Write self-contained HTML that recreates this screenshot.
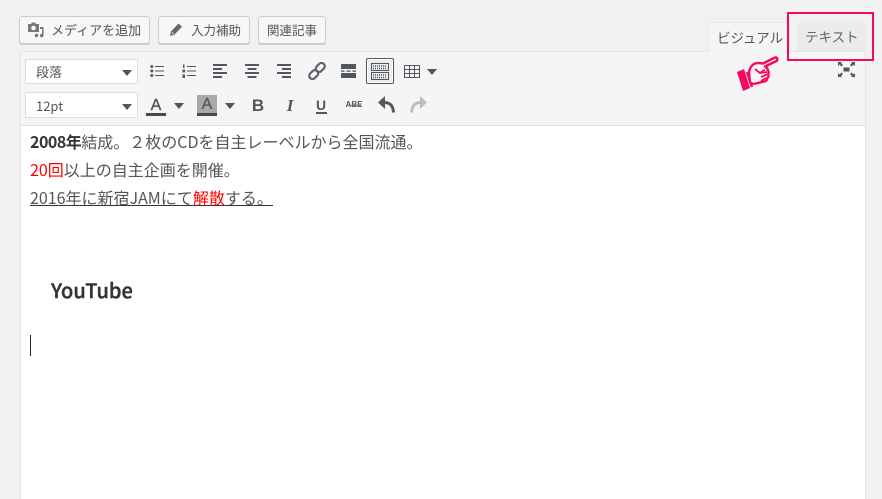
<!DOCTYPE html>
<html lang="ja">
<head>
<meta charset="utf-8">
<style>
html,body{margin:0;padding:0}
body{width:882px;height:499px;overflow:hidden;background:#f1f1f1;position:relative;font-family:"Noto Sans CJK JP","Liberation Sans",sans-serif;color:#555}
.a{position:absolute;box-sizing:border-box}
.btn{background:#f7f7f7;border:1px solid #cccccc;border-radius:3px;box-shadow:0 1px 0 #ccc;height:28px;top:16px;font-size:13px;line-height:26px;color:#555;white-space:nowrap;text-align:left}
.sel{left:25px;width:113px;background:#fff;border:1px solid #ddd;font-size:13px;color:#555;padding-left:10px;line-height:24px}
.sel i{position:absolute;right:5px;top:10px;width:0;height:0;border-left:5px solid transparent;border-right:5px solid transparent;border-top:6px solid #555}
.tri{width:0;height:0;border-left:5px solid transparent;border-right:5px solid transparent;border-top:6px solid #555}
.txt{left:30px;font-size:16px;color:#555;white-space:nowrap;line-height:24px;font-family:"Noto Sans CJK JP","Liberation Sans",sans-serif}
.r{color:#f00}
svg{position:absolute;overflow:visible}
</style>
</head>
<body>
<!-- buttons -->
<div class="a btn" style="left:19px;width:131px;padding-left:31px">メディアを追加</div>
<svg style="left:27px;top:22px" width="18" height="16" viewBox="0 0 18 16"><path d="M1 2h3l1-1.500h3l1 1.500h3v8H1z" fill="#777"/><circle cx="6.500" cy="6" r="2.300" fill="#f7f7f7"/><path d="M13 5h3.500v8.500a1.800 1.800 0 1 1-1.500-1.700V7h-2z" fill="#777"/><circle cx="9.500" cy="13.500" r="1.700" fill="#777"/></svg>
<div class="a btn" style="left:158px;width:92px;padding-left:32px;font-size:12.500px">入力補助</div>
<svg style="left:169px;top:22px" width="14" height="15" viewBox="0 0 14 15"><path d="M1 14l1-4.500L9.500 1.500l3.500 3.300-7.700 8z" fill="#666"/><path d="M3 10.500l1.500 1.500" stroke="#f7f7f7" stroke-width="1"/></svg>
<div class="a btn" style="left:258px;width:68px;padding-left:8px;font-size:12.500px">関連記事</div>

<!-- editor frame -->
<div class="a" style="left:20px;top:51px;width:846px;height:448px;background:#fff;border:1px solid #e5e5e5;border-bottom:0"></div>
<div class="a" style="left:21px;top:52px;width:844px;height:73px;background:#f5f5f5"></div>
<div class="a" style="left:21px;top:125px;width:844px;height:1px;background:#dedede"></div>

<!-- tabs -->
<div class="a" style="left:708px;top:22px;width:82px;height:30px;background:#f5f5f5;border:1px solid #e8e8e8;border-bottom:0;font-size:13.500px;line-height:28px;padding-left:8px;color:#555;white-space:nowrap">ビジュアル</div>
<div class="a" style="left:797px;top:23px;width:69px;height:28px;background:#ebebeb;font-size:13.500px;line-height:27px;padding-left:8px;color:#666;white-space:nowrap">テキスト</div>
<div class="a" style="left:787px;top:12px;width:87px;height:49px;border:2px solid #f5085f"></div>

<!-- hand -->
<svg style="left:736px;top:55px" width="42" height="39" viewBox="0 0 42 39">
<path d="M1 17l7-3 6 19-7 3z" fill="#f5085f"/>
<path d="M11 17l5 15" stroke="#f5085f" stroke-width="2.500"/>
<path d="M13 17c1-5 4-9 9-9 2 0 4 .5 5 .5L39 2.500c2.500-.5 3 2.500 1.500 3.500L29 11.500c2 1 3 2 2.500 3.500 1.500 1 1.500 3 .5 4 1 1.500.5 3.500-1 4.500 0 2-1.500 3-3 3l-6 1.500c-4 1-6.500 1.500-8-1z" fill="#fdf4f7" stroke="#f5085f" stroke-width="2.400" stroke-linejoin="round"/>
<path d="M19 14l5 4c2-1 3-3 5-3M25 18l6-1M25 22l6-2.500M25 26l5-3" stroke="#f5085f" stroke-width="1.800" fill="none"/>
</svg>

<!-- fullscreen -->
<svg style="left:838px;top:62px" width="17" height="15" viewBox="0 0 17 15"><g fill="#555"><rect x="5.500" y="5.500" width="6" height="4"/><path d="M0 0h4L3 1l2 2-1.500 1.500-2-2-1.500 1.500zM17 0h-4l1 1-2 2 1.500 1.500 2-2 1.500 1.500zM0 15h4l-1-1 2-2-1.500-1.500-2 2L0 11zM17 15h-4l1-1-2-2 1.500-1.500 2 2 1.500-1.500z"/></g></svg>

<!-- selects -->
<div class="a sel" style="top:59px;height:25px">段落<i></i></div>
<div class="a sel" style="top:92px;height:26px;line-height:26px">12pt<i style="top:11px"></i></div>

<!-- toolbar row 1 -->
<svg style="left:150px;top:64px" width="14" height="14" viewBox="0 0 14 14"><g fill="#50575e"><circle cx="1.800" cy="2.500" r="1.500"/><circle cx="1.800" cy="7" r="1.500"/><circle cx="1.800" cy="11.500" r="1.500"/><rect x="5" y="2" width="9" height="1"/><rect x="5" y="6.500" width="9" height="1"/><rect x="5" y="11" width="9" height="1"/></g></svg>
<svg style="left:182px;top:64px" width="14" height="14" viewBox="0 0 14 14"><g fill="#50575e"><rect x="1" y="0.500" width="1.500" height="3.500"/><rect x="0.500" y="5.500" width="2.500" height="3"/><rect x="0.500" y="10.500" width="2.500" height="3.500"/><rect x="5" y="2" width="9" height="1"/><rect x="5" y="6.500" width="9" height="1"/><rect x="5" y="11" width="9" height="1"/></g></svg>
<svg style="left:213px;top:64px" width="14" height="14" viewBox="0 0 14 14"><g fill="#50575e"><rect x="0" y="0" width="14" height="2"/><rect x="0" y="4" width="9" height="2"/><rect x="0" y="8" width="14" height="2"/><rect x="0" y="12" width="9" height="2"/></g></svg>
<svg style="left:245px;top:64px" width="14" height="14" viewBox="0 0 14 14"><g fill="#50575e"><rect x="0" y="0" width="14" height="2"/><rect x="2.500" y="4" width="9" height="2"/><rect x="0" y="8" width="14" height="2"/><rect x="2.500" y="12" width="9" height="2"/></g></svg>
<svg style="left:277px;top:64px" width="14" height="14" viewBox="0 0 14 14"><g fill="#50575e"><rect x="0" y="0" width="14" height="2"/><rect x="5" y="4" width="9" height="2"/><rect x="0" y="8" width="14" height="2"/><rect x="5" y="12" width="9" height="2"/></g></svg>
<svg style="left:308px;top:62px" width="18" height="18" viewBox="0 0 18 18"><g fill="none" stroke="#5c636a" stroke-width="2.200"><rect x="9" y="0.500" width="6.500" height="10" rx="3.200" transform="rotate(45 12.300 5.500)"/><rect x="2.500" y="7.500" width="6.500" height="10" rx="3.200" transform="rotate(45 5.700 12.500)"/></g></svg>
<svg style="left:341px;top:64px" width="15" height="14" viewBox="0 0 15 14"><g fill="#50575e"><rect y="0" width="15" height="5"/><rect y="6.500" width="3.500" height="1.300"/><rect x="5.500" y="6.500" width="4" height="1.300"/><rect x="11.500" y="6.500" width="3.500" height="1.300"/><rect y="9" width="15" height="5"/></g></svg>
<div class="a" style="left:366px;top:58px;width:28px;height:26px;border:1px solid #555;border-radius:2px;background:#ececec;box-shadow:inset 0 0 0 1px #fff"></div>
<svg style="left:371px;top:63px" width="18" height="17" viewBox="0 0 18 17"><g fill="none" stroke="#50575e"><rect x="0.500" y="0.500" width="17" height="7"/><rect x="0.500" y="9.500" width="17" height="7"/></g><g stroke="#50575e" stroke-dasharray="1 1" stroke-width="1.500"><path d="M2 3h14M2 5.500h14M2 12h14M2 14.500h14"/></g></svg>
<svg style="left:404px;top:65px" width="16" height="13" viewBox="0 0 16 13"><g fill="none" stroke="#50575e"><rect x="0.500" y="0.500" width="15" height="12"/><path d="M5.500 0v13M10.500 0v13M0 4.500h16M0 8.500h16"/></g></svg>
<div class="a tri" style="left:427px;top:69px"></div>

<!-- toolbar row 2 -->
<div class="a" style="left:146px;top:96px;width:20px;height:19px;text-align:center;font-size:16px;line-height:19px;color:#50575e;-webkit-text-stroke:.4px #50575e;font-family:'Liberation Sans',sans-serif">A</div>
<div class="a" style="left:146px;top:113px;width:20px;height:3px;background:#444b52"></div>
<div class="a tri" style="left:174px;top:103px"></div>
<div class="a" style="left:197px;top:95px;width:20px;height:18px;background:#a9a9a9;text-align:center;font-size:16px;line-height:19px;color:#50575e;-webkit-text-stroke:.3px #50575e;font-family:'Liberation Sans',sans-serif">A</div>
<div class="a" style="left:197px;top:113px;width:20px;height:3px;background:#444b52"></div>
<div class="a tri" style="left:225px;top:103px"></div>
<div class="a" style="left:250px;top:95px;width:16px;height:20px;text-align:center;font-size:17px;font-weight:700;line-height:21px;color:#50575e;font-family:'Liberation Sans',sans-serif">B</div>
<div class="a" style="left:282px;top:95px;width:16px;height:20px;text-align:center;font-size:17px;font-weight:700;font-style:italic;line-height:21px;color:#50575e;font-family:'Liberation Serif',serif">I</div>
<div class="a" style="left:314px;top:96px;width:14px;height:17px;text-align:center;font-size:14px;font-weight:700;line-height:18px;color:#50575e;font-family:'Liberation Sans',sans-serif">U</div>
<div class="a" style="left:316px;top:112px;width:11px;height:2px;background:#50575e"></div>
<div class="a" style="left:343px;top:99px;width:22px;height:12px;text-align:center;font-size:8px;font-weight:700;line-height:12px;color:#50575e;font-family:'Liberation Sans',sans-serif">ABE</div>
<div class="a" style="left:346px;top:105px;width:15px;height:1px;background:#777"></div>
<svg style="left:378px;top:96px" width="17" height="17" viewBox="0 0 17 17"><path d="M0 6.500L7 0v13z" fill="#50575e"/><path d="M6 6.500c5 0 9 2 9.500 10" fill="none" stroke="#50575e" stroke-width="3"/></svg>
<svg style="left:410px;top:96px" width="17" height="17" viewBox="0 0 17 17"><path d="M17 6.500L10 0v13z" fill="#b9bec3"/><path d="M11 6.500c-5 0-9 2-9.500 10" fill="none" stroke="#b9bec3" stroke-width="3"/></svg>

<!-- content -->
<div class="a txt" style="top:129px"><b style="color:#333;letter-spacing:-.5px">2008年</b>結成。２枚のCDを自主レーベルから全国流通。</div>
<div class="a txt" style="top:157px"><span class="r">20回</span>以上の自主企画を開催。</div>
<div class="a txt" style="top:185px;width:243px;overflow:hidden;height:26px"><span style="text-decoration:underline;text-decoration-color:#333">2016年に新宿JAMにて<span class="r">解散</span>する。&nbsp;&nbsp;</span></div>
<div class="a" style="left:51px;top:277px;font-size:20px;line-height:26px;font-weight:500;color:#333;-webkit-text-stroke:.4px #333;font-family:'Noto Sans CJK JP','Liberation Sans',sans-serif">YouTube</div>
<div class="a" style="left:30px;top:335px;width:1px;height:21px;background:#222"></div>
</body>
</html>
